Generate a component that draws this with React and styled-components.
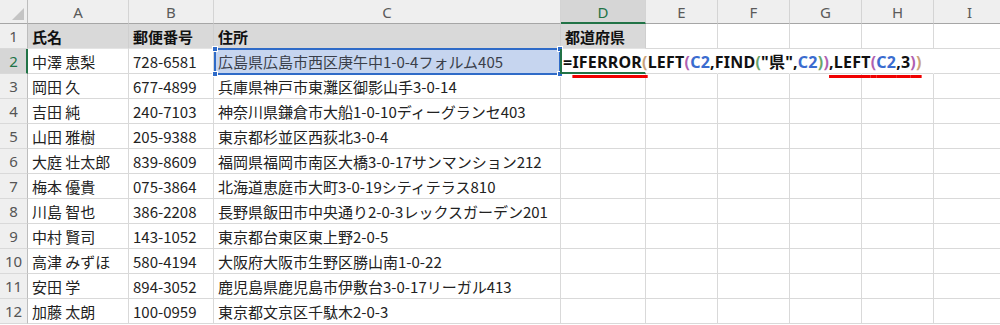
import React from "react";
import styled, { createGlobalStyle, css } from "styled-components";

const Global = createGlobalStyle`
  html, body { margin: 0; padding: 0; background: #fff; }
  body { font-family: "Noto Sans CJK JP", "Noto Sans", sans-serif; overflow: hidden; }
  * { box-sizing: border-box; }
`;

const COLS = ["A", "B", "C", "D", "E", "F", "G", "H", "I"];

const Sheet = styled.div`
  display: grid;
  grid-template-columns: 28px 101px 85px 347px 85px 72px 72px 72px 72px 72px;
  grid-template-rows: 24px;
  grid-auto-rows: 25px;
  width: 1005px;
  overflow: hidden;
`;

const Corner = styled.div`
  position: relative;
  background: #efefef;
  border-right: 1px solid #bdbdbd;
  border-bottom: 1px solid #a6a6a6;
  &::after {
    content: "";
    position: absolute;
    right: 3px;
    bottom: 3px;
    width: 0;
    height: 0;
    border-left: 12px solid transparent;
    border-bottom: 12px solid #c4c4c4;
  }
`;

const ColHead = styled.div`
  display: flex;
  align-items: center;
  justify-content: center;
  font-family: "Noto Sans", "Liberation Sans", sans-serif;
  font-size: 15px;
  color: #5a5a5a;
  background: #efefef;
  border-right: 1px solid #d4d4d4;
  border-bottom: 1px solid #a6a6a6;
  padding-top: 1px;
  ${(p) =>
    p.$active &&
    css`
      background: #d6d6d6;
      color: #217346;
      border-bottom: 2px solid #217346;
      padding-top: 2px;
    `}
`;

const RowHead = styled.div`
  display: flex;
  align-items: center;
  justify-content: center;
  font-family: "Noto Sans", "Liberation Sans", sans-serif;
  font-size: 15px;
  color: #555;
  background: #efefef;
  border-right: 1px solid #bdbdbd;
  border-bottom: 1px solid #d9d9d9;
  ${(p) =>
    p.$active &&
    css`
      background: #d6d6d6;
      color: #217346;
      border-right: 2px solid #217346;
      padding-left: 1px;
    `}
`;

const Cell = styled.div`
  position: relative;
  display: flex;
  align-items: center;
  padding: 0 4px;
  font-size: 15px;
  color: #222;
  white-space: nowrap;
  border-right: 1px solid #d9d9d9;
  border-bottom: 1px solid #d9d9d9;
  background: #fff;
  ${(p) =>
    p.$head &&
    css`
      background: #d9d9d9;
      font-weight: 700;
      color: #111;
      border-right-color: #cfcfcf;
      border-bottom-color: #e4e4e4;
    `}
  ${(p) =>
    p.$noRight &&
    css`
      border-right-color: transparent;
    `}
`;

const SelectedCell = styled(Cell)`
  background: #c6d5ef;
  color: #3a3f4a;
  border: 2px solid #2f6bc8;
  margin-top: -1px;
  height: 27px;
  padding-left: 2px;
  z-index: 2;
  border-right-width: 2px;
`;

const Handle = styled.span`
  position: absolute;
  width: 6px;
  height: 6px;
  background: #2f6bc8;
  border: 1px solid #fff;
  ${(p) => (p.$top ? "top: -4px;" : "bottom: -4px;")}
  ${(p) => (p.$left ? "left: -4px;" : "right: -4px;")}
`;

const EditCell = styled(Cell)`
  overflow: visible;
  z-index: 3;
  padding-left: 1px;
  border-right-color: transparent;
  border-left: 2px solid #217346;
  border-bottom: 2px solid #217346;
  margin-left: -1px;
`;

const Formula = styled.span`
  font-family: "Noto Sans", "Noto Sans CJK JP", sans-serif;
  font-weight: 700;
  font-size: 16px;
  color: #111;
  letter-spacing: 0.22px;
`;

const Tok = styled.span`
  color: ${(p) => p.$c || "inherit"};
`;

const Marked = styled.span`
  text-decoration: underline;
  text-decoration-color: #f00000;
  text-decoration-thickness: 3px;
  text-underline-offset: 7px;
  text-decoration-skip-ink: none;
`;

const REF = "#3b6ccf";
const P1 = "#c9a27a";
const P2 = "#b05fb0";
const P3 = "#6aa56a";

const rows = [
  ["中澤 恵梨", "728-6581", "広島県広島市西区庚午中1-0-4フォルム405"],
  ["岡田 久", "677-4899", "兵庫県神戸市東灘区御影山手3-0-14"],
  ["吉田 純", "240-7103", "神奈川県鎌倉市大船1-0-10ディーグランセ403"],
  ["山田 雅樹", "205-9388", "東京都杉並区西荻北3-0-4"],
  ["大庭 壮太郎", "839-8609", "福岡県福岡市南区大橋3-0-17サンマンション212"],
  ["梅本 優貴", "075-3864", "北海道恵庭市大町3-0-19シティテラス810"],
  ["川島 智也", "386-2208", "長野県飯田市中央通り2-0-3レックスガーデン201"],
  ["中村 賢司", "143-1052", "東京都台東区東上野2-0-5"],
  ["高津 みずほ", "580-4194", "大阪府大阪市生野区勝山南1-0-22"],
  ["安田 学", "894-3052", "鹿児島県鹿児島市伊敷台3-0-17リーガル413"],
  ["加藤 太朗", "100-0959", "東京都文京区千駄木2-0-3"],
];

function FormulaText() {
  return (
    <Formula>
      =<Marked>IFERROR<Tok $c={P1}>(</Tok></Marked>LEFT<Tok $c={P2}>(</Tok>
      <Tok $c={REF}>C2</Tok>,FIND<Tok $c={P3}>(</Tok>"県",<Tok $c={REF}>C2</Tok>
      <Tok $c={P3}>)</Tok>
      <Tok $c={P2}>)</Tok>
      <Marked>
        ,LEFT<Tok $c={P2}>(</Tok>
        <Tok $c={REF}>C2</Tok>,3<Tok $c={P2}>)</Tok>
        <Tok $c={P1}>)</Tok>
      </Marked>
    </Formula>
  );
}

export default function App() {
  return (
    <>
      <Global />
      <Sheet>
        <Corner />
        {COLS.map((c) => (
          <ColHead key={c} $active={c === "D"}>
            {c}
          </ColHead>
        ))}

        <RowHead>1</RowHead>
        <Cell $head>氏名</Cell>
        <Cell $head>郵便番号</Cell>
        <Cell $head>住所</Cell>
        <Cell $head>都道府県</Cell>
        {[0, 1, 2, 3, 4].map((i) => (
          <Cell key={i} />
        ))}

        {rows.map((r, i) => {
          const n = i + 2;
          if (n === 2) {
            return (
              <React.Fragment key={n}>
                <RowHead $active>{n}</RowHead>
                <Cell>{r[0]}</Cell>
                <Cell>{r[1]}</Cell>
                <SelectedCell>
                  {r[2]}
                  <Handle $top $left />
                  <Handle $top />
                  <Handle $left />
                  <Handle />
                </SelectedCell>
                <EditCell>
                  <FormulaText />
                </EditCell>
                <Cell $noRight />
                <Cell $noRight />
                <Cell $noRight />
                <Cell $noRight />
                <Cell />
              </React.Fragment>
            );
          }
          return (
            <React.Fragment key={n}>
              <RowHead>{n}</RowHead>
              <Cell>{r[0]}</Cell>
              <Cell>{r[1]}</Cell>
              <Cell>{r[2]}</Cell>
              {[0, 1, 2, 3, 4, 5].map((k) => (
                <Cell key={k} />
              ))}
            </React.Fragment>
          );
        })}
      </Sheet>
    </>
  );
}
